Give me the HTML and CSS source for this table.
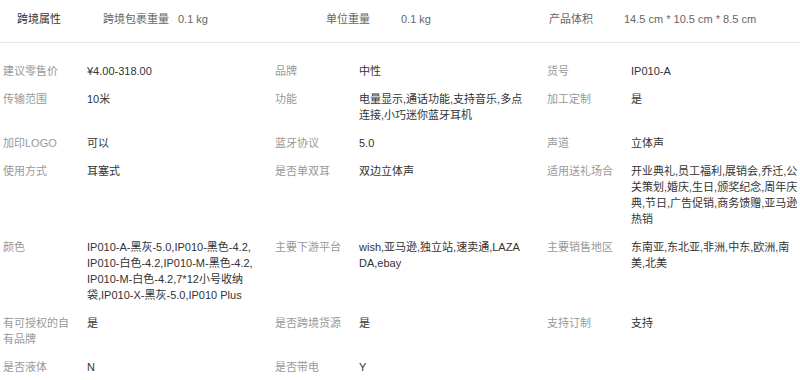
FILE: index.html
```html
<!DOCTYPE html>
<html lang="zh-CN">
<head>
<meta charset="utf-8">
<title>跨境属性</title>
<link rel="stylesheet" href="styles.css">
</head>
<body>
<div class="sheet">
  <div class="head">
    <div class="head-title">跨境属性</div>
    <div class="head-item"><span class="head-label">跨境包裹重量</span><span class="head-value">0.1 kg</span></div>
    <div class="head-item"><span class="head-label">单位重量</span><span class="head-value">0.1 kg</span></div>
    <div class="head-item"><span class="head-label">产品体积</span><span class="head-value">14.5 cm * 10.5 cm * 8.5 cm</span></div>
  </div>
  <div class="attrs">
    <div class="row">
      <div class="cell"><div class="label">建议零售价</div><div class="value">¥4.00-318.00</div></div>
      <div class="cell"><div class="label">品牌</div><div class="value">中性</div></div>
      <div class="cell"><div class="label">货号</div><div class="value">IP010-A</div></div>
    </div>
    <div class="row">
      <div class="cell"><div class="label">传输范围</div><div class="value">10米</div></div>
      <div class="cell"><div class="label">功能</div><div class="value">电量显示,通话功能,支持音乐,多点连接,小巧迷你蓝牙耳机</div></div>
      <div class="cell"><div class="label">加工定制</div><div class="value">是</div></div>
    </div>
    <div class="row">
      <div class="cell"><div class="label">加印LOGO</div><div class="value">可以</div></div>
      <div class="cell"><div class="label">蓝牙协议</div><div class="value">5.0</div></div>
      <div class="cell"><div class="label">声道</div><div class="value">立体声</div></div>
    </div>
    <div class="row">
      <div class="cell"><div class="label">使用方式</div><div class="value">耳塞式</div></div>
      <div class="cell"><div class="label">是否单双耳</div><div class="value">双边立体声</div></div>
      <div class="cell"><div class="label">适用送礼场合</div><div class="value">开业典礼,员工福利,展销会,乔迁,公关策划,婚庆,生日,颁奖纪念,周年庆典,节日,广告促销,商务馈赠,亚马逊热销</div></div>
    </div>
    <div class="row">
      <div class="cell"><div class="label">颜色</div><div class="value">IP010-A-黑灰-5.0,IP010-黑色-4.2,IP010-白色-4.2,IP010-M-黑色-4.2,IP010-M-白色-4.2,7*12小号收纳袋,IP010-X-黑灰-5.0,IP010 Plus</div></div>
      <div class="cell"><div class="label">主要下游平台</div><div class="value">wish,亚马逊,独立站,速卖通,LAZADA,ebay</div></div>
      <div class="cell"><div class="label">主要销售地区</div><div class="value">东南亚,东北亚,非洲,中东,欧洲,南美,北美</div></div>
    </div>
    <div class="row">
      <div class="cell"><div class="label">有可授权的自有品牌</div><div class="value">是</div></div>
      <div class="cell"><div class="label">是否跨境货源</div><div class="value">是</div></div>
      <div class="cell"><div class="label">支持订制</div><div class="value">支持</div></div>
    </div>
    <div class="row">
      <div class="cell"><div class="label">是否液体</div><div class="value">N</div></div>
      <div class="cell"><div class="label">是否带电</div><div class="value">Y</div></div>
    </div>
  </div>
</div>
</body>
</html>
```

FILE: styles.css
```css
html, body {
  margin: 0;
  padding: 0;
  background: #fff;
  overflow: hidden;
}

.sheet {
  width: 830px;
  font-family: "Liberation Sans", "Noto Sans CJK SC", sans-serif;
  font-size: 11px;
  line-height: 16px;
}

.head {
  display: flex;
  height: 43px;
  padding: 11px 0 0 17px;
  box-sizing: border-box;
  border-bottom: 1px solid #e6e6e6;
}

.head-title {
  width: 86px;
  color: #333;
}

.head-item {
  display: flex;
  width: 223px;
}

.head-label {
  width: 75px;
  flex: none;
  color: #666;
}

.head-value {
  color: #666;
  white-space: nowrap;
}

.attrs {
  padding: 14px 0 0 3px;
}

.row {
  display: flex;
  padding: 6px 0;
}

.cell {
  display: flex;
  width: 272px;
  flex: none;
}

.label {
  width: 72px;
  padding-right: 12px;
  flex: none;
  color: #999;
}

.value {
  width: 166.5px;
  padding-right: 21.5px;
  flex: none;
  color: #333;
  word-break: break-all;
}
```
